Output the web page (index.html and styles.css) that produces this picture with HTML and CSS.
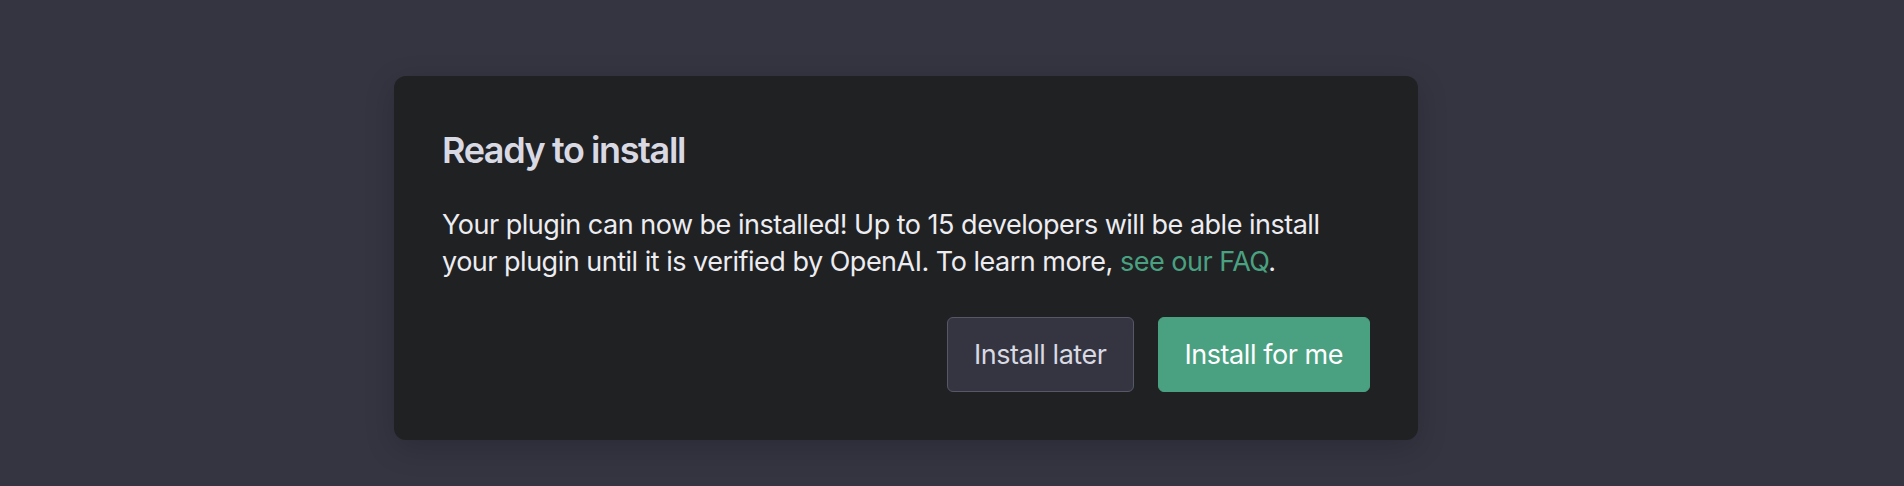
FILE: index.html
```html
<!DOCTYPE html>
<html lang="en">
<head>
<meta charset="utf-8">
<title>Ready to install</title>
<link rel="stylesheet" href="styles.css">
</head>
<body>
<div class="page">
  <div class="dialog">
    <h2 class="title">Ready to install</h2>
    <p class="body">Your plugin can now be installed! Up to 15 developers will be able install your plugin until it is verified by OpenAI. To learn more, <a class="link" href="#">see our FAQ</a>.</p>
    <div class="actions">
      <button class="btn btn-neutral">Install later</button>
      <button class="btn btn-primary">Install for me</button>
    </div>
  </div>
</div>
</body>
</html>
```
FILE: styles.css
```css
html, body {
  margin: 0;
  padding: 0;
}
body {
  background: #343541;
  font-family: "Inter", "Liberation Sans", sans-serif;
  width: 1904px;
  height: 486px;
  overflow: hidden;
}
.page {
  padding: 76px 0 0 394px;
}
.dialog {
  width: 1024px;
  box-sizing: border-box;
  padding: 48px;
  background: #202123;
  border-radius: 12px;
  box-shadow: 0 8px 30px rgba(0, 0, 0, 0.18);
}
.title {
  margin: 0;
  font-size: 36px;
  line-height: 52px;
  font-weight: 600;
  color: #d9d9e3;
  letter-spacing: -1.4px;
}
.body {
  margin: 31px 0 0;
  font-size: 27px;
  line-height: 36.5px;
  color: #ececf1;
  letter-spacing: -0.5px;
}
.link {
  color: #4aa181;
  text-decoration: none;
}
.actions {
  display: flex;
  justify-content: flex-end;
  gap: 24px;
  margin-top: 37px;
}
.btn {
  font-family: inherit;
  font-size: 27px;
  line-height: 37px;
  letter-spacing: -0.45px;
  padding: 18px 26px;
  border-radius: 6px;
  border: 1px solid transparent;
}
.btn-neutral {
  background: #343541;
  border-color: #565869;
  color: #d9d9e3;
}
.btn-primary {
  background: #4aa181;
  border-color: #4aa181;
  color: #fff;
}
```
